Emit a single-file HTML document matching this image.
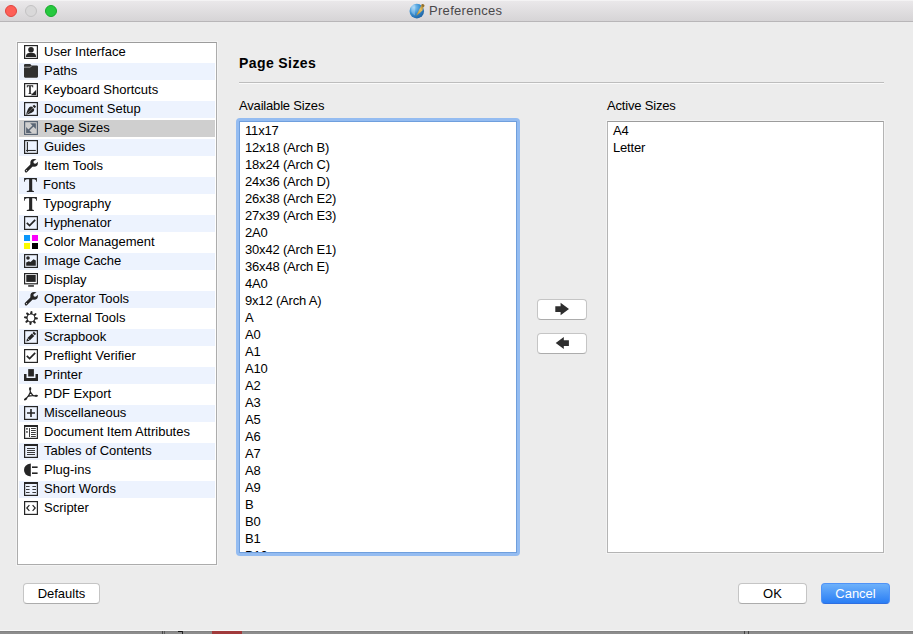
<!DOCTYPE html>
<html><head><meta charset="utf-8">
<style>
*{margin:0;padding:0;box-sizing:border-box}
html,body{width:913px;height:634px;overflow:hidden}
body{background:#ececec;font-family:"Liberation Sans",sans-serif;font-size:13px;color:#000;position:relative}
.a{position:absolute}
#tb{left:0;top:0;width:913px;height:22px;background:linear-gradient(#ebe9eb,#d6d4d6);border-bottom:1px solid #b8b6b8}
#tb .top{left:0;top:0;width:913px;height:1px;background:#f4f3f4}
.dot{width:12px;height:12px;border-radius:50%;top:5px}
#title{left:429px;top:3px;font-size:13px;letter-spacing:0.3px;color:#4a484a;white-space:nowrap}
#side{left:17px;top:42px;width:200px;height:523px;background:#fff;border:1px solid #acacac;border-top-color:#9c9c9c;box-shadow:0 0 0 1px #f3f3f3}
.row{position:absolute;left:1px;width:196px;height:17px}
.row.alt{background:#edf3fe}
.row.sel{background:#cfcfcf}
.row svg{position:absolute;left:5px;top:1px;width:14px;height:14px}
.row span{position:absolute;left:25px;top:0px;white-space:nowrap;line-height:16px}
#hd{left:239px;top:55px;font-weight:bold;font-size:14px;letter-spacing:0.4px;white-space:nowrap}
#sep{left:239px;top:82px;width:645px;height:2px;border-top:1px solid #bdbdbd;border-bottom:1px solid #fafafa}
.lbl{top:98px;white-space:nowrap;letter-spacing:-0.18px}
#avail{left:236px;top:118px;width:284px;height:438px;border-radius:4px;background:#94bcf1}
#availin{left:239px;top:121px;width:278px;height:432px;background:#fff;border:1px solid #6f9fdd;overflow:hidden}
.it{position:absolute;left:5px;height:17px;line-height:17px;white-space:nowrap;letter-spacing:-0.18px}
#active{left:607px;top:121px;width:277px;height:432px;background:#fff;border:1px solid #b4b4b4;border-top-color:#9c9c9c;box-shadow:0 0 0 1px #f3f3f3}
.btn{height:21px;background:#fff;border:1px solid #c5c5c5;border-bottom-color:#acacac;border-radius:4px;text-align:center;line-height:19px}
#cancel{background:linear-gradient(#6db1fa,#2a7ef5);border-color:#4f93f7 #4f93f7 #2f6fe0;color:#fff}
#bot{left:0;top:631px;width:913px;height:3px;background:linear-gradient(#7a7a7a,#8c8c8c 40%,#8e8e8e)}
</style></head><body>
<div id="tb" class="a"><div class="a top"></div>
  <div class="a dot" style="left:5px;background:#fe5f57;border:1px solid #e0443e"></div>
  <div class="a dot" style="left:25px;background:#d9d8d9;border:1px solid #c3c2c3"></div>
  <div class="a dot" style="left:45px;background:#27c93f;border:1px solid #17a92c"></div>
  <svg class="a" style="left:406px;top:1px" width="22" height="20" viewBox="0 0 22 20">
    <defs><radialGradient id="g1" cx="0.3" cy="0.25" r="0.9"><stop offset="0" stop-color="#8fcdf6"/><stop offset="0.45" stop-color="#3d92d3"/><stop offset="1" stop-color="#17599a"/></radialGradient>
    <linearGradient id="g2" x1="0" y1="1" x2="1" y2="0"><stop offset="0" stop-color="#b58a2c"/><stop offset="0.6" stop-color="#e4c064"/><stop offset="1" stop-color="#9a7424"/></linearGradient></defs>
    <circle cx="10.8" cy="10.1" r="7.3" fill="url(#g1)"/>
    <path d="M5.2 5 Q7 3.4 9.4 3.6 L9 14.6 Q6.6 13 5.4 11 Z" fill="#fff" opacity="0.25"/>
    <path d="M10.1 14.8 L15.3 4.4 L17.8 5.2 L16.4 9.6 Q14 12.4 10.1 14.8 Z" fill="url(#g2)"/>
    <ellipse cx="16.9" cy="4.4" rx="1.7" ry="1.3" transform="rotate(30 16.9 4.4)" fill="#94702a"/>
  </svg>
  <div id="title" class="a">Preferences</div>
</div>

<div id="side" class="a">
<div class="row" style="top:1px"><svg viewBox="0 0 14 14"><rect x="0.6" y="0.6" width="12.8" height="12.8" stroke="#262626" fill="none" stroke-width="1.2"/><circle cx="7" cy="4.8" r="2.8" fill="#262626"/><path d="M1.8 11.9 Q2.2 8.1 5 8.0 H9 Q11.8 8.1 12.2 11.9 Z" fill="#262626"/></svg><span>User Interface</span></div>
<div class="row alt" style="top:20px"><svg viewBox="0 0 14 14"><path d="M0 1.1 Q0 0 1.1 0 H6.2 L7.6 1.4 H12.9 Q14 1.4 14 2.5 V12.6 Q14 13.7 12.9 13.7 H1.1 Q0 13.7 0 12.6 Z" fill="#303030"/><path d="M0 3.2 H6.3 L7.8 1.6" stroke="#c4c4c4" stroke-width="0.8" fill="none"/></svg><span>Paths</span></div>
<div class="row" style="top:39px"><svg viewBox="0 0 14 14"><rect x="0.6" y="0.6" width="12.8" height="12.8" stroke="#262626" fill="none" stroke-width="1.2"/><path d="M2.8 2.2 H9.2 V4.4 H8.6 Q8.4 3.2 7.4 3.2 H6.8 V10.2 L7.6 10.4 V10.9 H4.4 V10.4 L5.2 10.2 V3.2 H4.6 Q3.6 3.2 3.4 4.4 H2.8 Z" fill="#262626"/><path d="M12.2 6.8 V12.2 H6.8 Z" fill="#262626"/></svg><span>Keyboard Shortcuts</span></div>
<div class="row alt" style="top:58px"><svg viewBox="0 0 14 14"><rect x="0.6" y="0.6" width="12.8" height="12.8" stroke="#262626" fill="none" stroke-width="1.2"/><g transform="translate(6.6 8.2) rotate(45)"><path d="M0 6.4 L-1.3 4.2 Q-3.2 0.6 -3 -1.4 Q-2.8 -3.6 0 -3.6 Q2.8 -3.6 3 -1.4 Q3.2 0.6 1.3 4.2 Z" fill="#262626"/><path d="M-1.7 -4.3 H1.7 L1.3 -6.4 H-1.3 Z" fill="#262626"/><path d="M0 5.2 V-2.6" stroke="#fff" stroke-width="0.6" stroke-dasharray="0.9 0.8"/></g></svg><span>Document Setup</span></div>
<div class="row sel" style="top:77px"><svg viewBox="0 0 14 14"><rect x="0.6" y="0.6" width="12.8" height="12.8" stroke="#5a6675" fill="none" stroke-width="1.2"/><path d="M4.2 9.8 L9.8 4.2" stroke="#5a6675" stroke-width="1.5"/><path d="M6.1 2.2 H11.9 V8 Z" fill="#5a6675"/><path d="M2.1 6.1 V11.9 H7.9 Z" fill="#5a6675"/></svg><span>Page Sizes</span></div>
<div class="row alt" style="top:96px"><svg viewBox="0 0 14 14"><rect x="0.6" y="0.6" width="12.8" height="12.8" stroke="#262626" fill="none" stroke-width="1.2"/><path d="M3.4 2 V11.4" stroke="#262626" stroke-width="1.1"/><path d="M2.2 10.5 H11.8" stroke="#262626" stroke-width="1.1"/><path d="M2.6 10.6 L3.4 12.2 L4.2 10.6Z" fill="#262626"/></svg><span>Guides</span></div>
<div class="row" style="top:115px"><svg viewBox="0 0 14 14"><defs><mask id="wm6"><rect x="-1" y="-1" width="16" height="16" fill="#fff"/><circle cx="11.1" cy="3.1" r="1.7" fill="#000"/><g transform="translate(11.1 3.1) rotate(-35)"><rect x="0" y="-1.45" width="6" height="2.9" fill="#000"/></g></mask></defs><g mask="url(#wm6)"><circle cx="10.1" cy="3.9" r="3.8" fill="#262626"/></g><path d="M2.1 11.9 L7.6 6.4" stroke="#262626" stroke-width="2.9" stroke-linecap="round"/><circle cx="2.4" cy="11.6" r="0.55" fill="#fff"/></svg><span>Item Tools</span></div>
<div class="row alt" style="top:134px"><svg viewBox="0 0 14 14"><path d="M0.1 0 H12.9 V4 H12.5 Q12.3 1.3 10.3 1.2 H8.2 V12.3 Q8.3 12.9 9.9 13 V13.9 H2.8 V13 Q4.9 12.9 5.1 12.3 V1.2 H2.7 Q0.7 1.3 0.5 4 H0.1 Z" fill="#262626"/></svg><span style="left:24px">Fonts</span></div>
<div class="row" style="top:153px"><svg viewBox="0 0 14 14"><path d="M0.1 0 H12.9 V4 H12.5 Q12.3 1.3 10.3 1.2 H8.2 V12.3 Q8.3 12.9 9.9 13 V13.9 H2.8 V13 Q4.9 12.9 5.1 12.3 V1.2 H2.7 Q0.7 1.3 0.5 4 H0.1 Z" fill="#262626"/></svg><span style="left:24px">Typography</span></div>
<div class="row alt" style="top:172px"><svg viewBox="0 0 14 14"><rect x="0.6" y="0.6" width="12.8" height="12.8" stroke="#262626" fill="none" stroke-width="1.2"/><path d="M2.8 6.8 L5.6 9.6 L11.2 3.8" stroke="#262626" stroke-width="1.7" fill="none"/></svg><span>Hyphenator</span></div>
<div class="row" style="top:191px"><svg viewBox="0 0 14 14"><rect x="0" y="0" width="6" height="6" fill="#0a96fb"/><rect x="8" y="0" width="6" height="6" fill="#fb00fb"/><rect x="0" y="8" width="6" height="6" fill="#fbfb00"/><rect x="8" y="8" width="6" height="6" fill="#000"/></svg><span>Color Management</span></div>
<div class="row alt" style="top:210px"><svg viewBox="0 0 14 14"><rect x="0.6" y="0.6" width="12.8" height="12.8" stroke="#262626" fill="none" stroke-width="1.2"/><circle cx="4" cy="4" r="1.8" fill="#262626"/><path d="M2.2 11.8 V8.5 L4.8 7.2 L6.5 8 L9.6 5.3 L11.8 6.4 V11.8 Z" fill="#262626"/></svg><span>Image Cache</span></div>
<div class="row" style="top:229px"><svg viewBox="0 0 14 14"><rect x="0.6" y="0.6" width="12.8" height="10.2" stroke="#262626" fill="none" stroke-width="1.2"/><rect x="2.3" y="2" width="9.4" height="6.9" fill="#262626"/><rect x="4.2" y="12.2" width="5.7" height="1.5" fill="#262626"/></svg><span>Display</span></div>
<div class="row alt" style="top:248px"><svg viewBox="0 0 14 14"><defs><mask id="wm13"><rect x="-1" y="-1" width="16" height="16" fill="#fff"/><circle cx="11.1" cy="3.1" r="1.7" fill="#000"/><g transform="translate(11.1 3.1) rotate(-35)"><rect x="0" y="-1.45" width="6" height="2.9" fill="#000"/></g></mask></defs><g mask="url(#wm13)"><circle cx="10.1" cy="3.9" r="3.8" fill="#262626"/></g><path d="M2.1 11.9 L7.6 6.4" stroke="#262626" stroke-width="2.9" stroke-linecap="round"/><circle cx="2.4" cy="11.6" r="0.55" fill="#fff"/></svg><span>Operator Tools</span></div>
<div class="row" style="top:267px"><svg viewBox="0 0 14 14"><g transform="translate(6.95 6.95)"><circle r="4.3" fill="#262626"/><path d="M-1.4 -3.5 L1.4 -3.5 L0.75 -6.9 L-0.75 -6.9 Z" fill="#262626" transform="rotate(5)"/><path d="M-1.4 -3.5 L1.4 -3.5 L0.75 -6.9 L-0.75 -6.9 Z" fill="#262626" transform="rotate(50)"/><path d="M-1.4 -3.5 L1.4 -3.5 L0.75 -6.9 L-0.75 -6.9 Z" fill="#262626" transform="rotate(95)"/><path d="M-1.4 -3.5 L1.4 -3.5 L0.75 -6.9 L-0.75 -6.9 Z" fill="#262626" transform="rotate(140)"/><path d="M-1.4 -3.5 L1.4 -3.5 L0.75 -6.9 L-0.75 -6.9 Z" fill="#262626" transform="rotate(185)"/><path d="M-1.4 -3.5 L1.4 -3.5 L0.75 -6.9 L-0.75 -6.9 Z" fill="#262626" transform="rotate(230)"/><path d="M-1.4 -3.5 L1.4 -3.5 L0.75 -6.9 L-0.75 -6.9 Z" fill="#262626" transform="rotate(275)"/><path d="M-1.4 -3.5 L1.4 -3.5 L0.75 -6.9 L-0.75 -6.9 Z" fill="#262626" transform="rotate(320)"/><circle r="3.35" fill="#fff"/></g></svg><span>External Tools</span></div>
<div class="row alt" style="top:286px"><svg viewBox="0 0 14 14"><rect x="0.6" y="0.6" width="12.8" height="12.8" stroke="#262626" fill="none" stroke-width="1.2"/><g transform="translate(6.7 7.1) rotate(45)"><path d="M0 6.2 L-1.7 3.4 H1.7 Z" fill="#262626"/><rect x="-1.7" y="-3.4" width="3.4" height="6.3" fill="#262626"/><path d="M-1.5 -4.1 H1.5 L1.7 -6.1 H-1.7 Z" fill="#262626"/></g></svg><span>Scrapbook</span></div>
<div class="row" style="top:305px"><svg viewBox="0 0 14 14"><rect x="0.6" y="0.6" width="12.8" height="12.8" stroke="#262626" fill="none" stroke-width="1.2"/><path d="M2.8 6.8 L5.6 9.6 L11.2 3.8" stroke="#262626" stroke-width="1.7" fill="none"/></svg><span>Preflight Verifier</span></div>
<div class="row alt" style="top:324px"><svg viewBox="0 0 14 14"><path d="M0 6 H2.5 V9.9 H11.5 V6 H14 V13.1 H0 Z" fill="#262626"/><rect x="4.2" y="1.1" width="5.7" height="7.4" fill="#262626"/></svg><span>Printer</span></div>
<div class="row" style="top:343px"><svg viewBox="0 0 14 14"><path d="M6.4 5.2 L9 8.6 L4.3 9.2 Z" stroke="#262626" stroke-width="1.25" fill="none"/><path d="M6.2 1 Q5.8 3 6.4 5.2 M9 8.6 Q11 8.8 13 8.8 M4.3 9.2 Q2.6 11 1.2 12.4" stroke="#262626" stroke-width="1.2" fill="none"/><ellipse cx="6.2" cy="1.8" rx="1.1" ry="1.8" fill="#262626"/><ellipse cx="12.2" cy="8.8" rx="1.8" ry="1" fill="#262626"/><ellipse cx="1.6" cy="12" rx="1.8" ry="1.1" transform="rotate(-40 1.6 12)" fill="#262626"/></svg><span>PDF Export</span></div>
<div class="row alt" style="top:362px"><svg viewBox="0 0 14 14"><rect x="0.6" y="0.6" width="12.8" height="12.8" stroke="#262626" fill="none" stroke-width="1.2"/><path d="M7 3 V11 M3 7 H11" stroke="#262626" stroke-width="1.6"/></svg><span>Miscellaneous</span></div>
<div class="row" style="top:381px"><svg viewBox="0 0 14 14"><rect x="0.6" y="0.6" width="12.8" height="12.8" stroke="#262626" fill="none" stroke-width="1.2"/><rect x="0" y="0" width="14" height="2" fill="#262626"/><rect x="2.2" y="3.1" width="1.5" height="1.5" fill="#262626"/><rect x="2.2" y="6.2" width="1.5" height="1.5" fill="#262626"/><path d="M5.5 3.1 V12" stroke="#262626" stroke-width="0.9"/><path d="M7 3.5 H11.8 M7 5.5 H11.8 M7 7.5 H11.8 M7 9.5 H11.8 M7 11.5 H11.8" stroke="#262626" stroke-width="0.9"/></svg><span>Document Item Attributes</span></div>
<div class="row alt" style="top:400px"><svg viewBox="0 0 14 14"><rect x="0.6" y="0.6" width="12.8" height="12.8" stroke="#262626" fill="none" stroke-width="1.2"/><rect x="0" y="0" width="14" height="2" fill="#262626"/><path d="M3 4.5 H11 M3 6.5 H11 M3 8.5 H11 M3 10.5 H11" stroke="#262626" stroke-width="0.9"/></svg><span>Tables of Contents</span></div>
<div class="row" style="top:419px"><svg viewBox="0 0 14 14"><path d="M6.8 0.6 V13.6 Q0 12.6 0 7.1 Q0 1.6 6.8 0.6 Z" fill="#262626"/><rect x="8" y="3.4" width="5.6" height="1.6" fill="#262626"/><rect x="8" y="9.4" width="5.6" height="1.6" fill="#262626"/></svg><span>Plug-ins</span></div>
<div class="row alt" style="top:438px"><svg viewBox="0 0 14 14"><rect x="0.6" y="0.6" width="12.8" height="12.8" stroke="#262626" fill="none" stroke-width="1.2"/><rect x="0" y="0" width="14" height="2" fill="#262626"/><path d="M2 4.5 H5.6 M8.4 4.5 H12 M2 7.5 H5.6 M8.4 7.5 H12 M2 10.5 H5.6 M8.4 10.5 H12" stroke="#262626" stroke-width="0.9"/></svg><span>Short Words</span></div>
<div class="row" style="top:457px"><svg viewBox="0 0 14 14"><rect x="0.6" y="0.6" width="12.8" height="12.8" stroke="#262626" fill="none" stroke-width="1.2"/><path d="M5.4 4.2 L2.8 7 L5.4 9.8 M8.6 4.2 L11.2 7 L8.6 9.8" stroke="#262626" stroke-width="1.2" fill="none"/></svg><span>Scripter</span></div>
</div>

<div id="hd" class="a">Page Sizes</div>
<div id="sep" class="a"></div>
<div class="a lbl" style="left:239px">Available Sizes</div>
<div class="a lbl" style="left:607px">Active Sizes</div>

<div id="avail" class="a"></div>
<div id="availin" class="a">
<div class="it" style="top:0px">11x17</div>
<div class="it" style="top:17px">12x18 (Arch B)</div>
<div class="it" style="top:34px">18x24 (Arch C)</div>
<div class="it" style="top:51px">24x36 (Arch D)</div>
<div class="it" style="top:68px">26x38 (Arch E2)</div>
<div class="it" style="top:85px">27x39 (Arch E3)</div>
<div class="it" style="top:102px">2A0</div>
<div class="it" style="top:119px">30x42 (Arch E1)</div>
<div class="it" style="top:136px">36x48 (Arch E)</div>
<div class="it" style="top:153px">4A0</div>
<div class="it" style="top:170px">9x12 (Arch A)</div>
<div class="it" style="top:187px">A</div>
<div class="it" style="top:204px">A0</div>
<div class="it" style="top:221px">A1</div>
<div class="it" style="top:238px">A10</div>
<div class="it" style="top:255px">A2</div>
<div class="it" style="top:272px">A3</div>
<div class="it" style="top:289px">A5</div>
<div class="it" style="top:306px">A6</div>
<div class="it" style="top:323px">A7</div>
<div class="it" style="top:340px">A8</div>
<div class="it" style="top:357px">A9</div>
<div class="it" style="top:374px">B</div>
<div class="it" style="top:391px">B0</div>
<div class="it" style="top:408px">B1</div>
<div class="it" style="top:425px">B10</div>
</div>

<div class="a btn" style="left:537px;top:299px;width:50px"></div><svg class="a" style="left:555px;top:302px" width="15" height="14" viewBox="0 0 15 14"><path d="M0.3 4.2 H5.6 V0.8 L14 7.0 L5.6 13.2 V9.9 H0.3 Z" fill="#2e2e2e"/></svg>
<div class="a btn" style="left:537px;top:333px;width:50px"></div><svg class="a" style="left:555px;top:336px" width="15" height="14" viewBox="0 0 15 14"><path d="M0.7 7.0 L8.8 0.9 V4.2 H13.9 V9.9 H8.8 V13.1 Z" fill="#2e2e2e"/></svg>

<div id="active" class="a">
  <div class="it" style="top:0px">A4</div>
  <div class="it" style="top:17px">Letter</div>
</div>

<div class="a btn" style="left:23px;top:583px;width:77px">Defaults</div>
<div class="a btn" style="left:738px;top:583px;width:69px">OK</div>
<div id="cancel" class="a btn" style="left:821px;top:583px;width:69px">Cancel</div>

<div class="a" style="left:0;top:630px;width:913px;height:1px;background:#f8f8f8"></div>
<div id="bot" class="a">
  <div class="a" style="left:162px;top:0;width:1px;height:3px;background:#4a4a4a"></div>
  <div class="a" style="left:164px;top:0;width:1px;height:3px;background:#5a5a5a"></div>
  <div class="a" style="left:178px;top:0;width:5px;height:1px;background:#111"></div>
  <div class="a" style="left:182px;top:0;width:1px;height:3px;background:#222"></div>
  <div class="a" style="left:212px;top:0;width:30px;height:3px;background:#a13a3b"></div>
  <div class="a" style="left:744px;top:0;width:1px;height:3px;background:#444"></div>
  <div class="a" style="left:748px;top:0;width:1px;height:3px;background:#444"></div>
</div>
</body></html>
